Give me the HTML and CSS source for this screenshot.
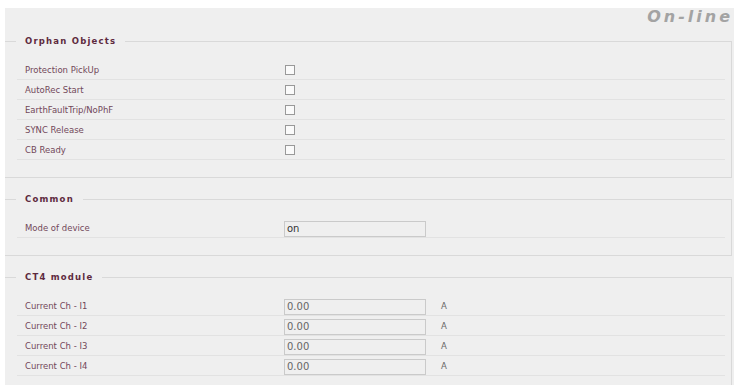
FILE: index.html
```html
<!DOCTYPE html>
<html lang="en">

<head>
    <meta charset="UTF-8">
    <title>Device status</title>
    <link rel="stylesheet" href="styles.css">
</head>

<body>

    <div class="panel">
        <!-- connection state -->
        <div class="status">On-line</div>

        <!-- Orphan Objects -->
        <fieldset class="group">
            <legend>Orphan Objects</legend>
            <div class="rows">
                <div class="row">
                    <span class="label">Protection PickUp</span>
                    <span class="value"><input type="checkbox" class="check"></span>
                </div>
                <div class="row">
                    <span class="label">AutoRec Start</span>
                    <span class="value"><input type="checkbox" class="check"></span>
                </div>
                <div class="row">
                    <span class="label">EarthFaultTrip/NoPhF</span>
                    <span class="value"><input type="checkbox" class="check"></span>
                </div>
                <div class="row">
                    <span class="label">SYNC Release</span>
                    <span class="value"><input type="checkbox" class="check"></span>
                </div>
                <div class="row">
                    <span class="label">CB Ready</span>
                    <span class="value"><input type="checkbox" class="check"></span>
                </div>
            </div>
        </fieldset>

        <!-- Common -->
        <fieldset class="group">
            <legend>Common</legend>
            <div class="rows">
                <div class="row">
                    <span class="label">Mode of device</span>
                    <span class="value"><input type="text" class="field" value="on" readonly></span>
                </div>
            </div>
        </fieldset>

        <!-- CT4 module -->
        <fieldset class="group">
            <legend>CT4 module</legend>
            <div class="rows">
                <div class="row">
                    <span class="label">Current Ch - I1</span>
                    <span class="value"><input type="text" class="field num" value="0.00" readonly></span>
                    <span class="unit">A</span>
                </div>
                <div class="row">
                    <span class="label">Current Ch - I2</span>
                    <span class="value"><input type="text" class="field num" value="0.00" readonly></span>
                    <span class="unit">A</span>
                </div>
                <div class="row">
                    <span class="label">Current Ch - I3</span>
                    <span class="value"><input type="text" class="field num" value="0.00" readonly></span>
                    <span class="unit">A</span>
                </div>
                <div class="row">
                    <span class="label">Current Ch - I4</span>
                    <span class="value"><input type="text" class="field num" value="0.00" readonly></span>
                    <span class="unit">A</span>
                </div>
            </div>
        </fieldset>
    </div>

</body>

</html>
```

FILE: styles.css
```css
/* page */
body {
    margin: 8px 4px 0 5px;
    background-color: #fff;
    font-family: "DejaVu Sans", Verdana, sans-serif;
}

.panel {
    background-color: #efefef;
    height: 377px;
    overflow: hidden;
}

/* On-line text */
.status {
    text-align: right;
    font-size: 16px;
    font-weight: bold;
    font-style: italic;
    letter-spacing: 3px;
    line-height: 18px;
    color: #a3a3a3;
    padding-right: 1px;
    height: 27px;
}

/* groups */
.group {
    margin: 0 2px 15px 0;
    padding: 0 6px 17px 12px;
    border: 1px solid #d9d9d9;
    border-left: none;
}

.group legend {
    margin-left: -1px;
    padding: 0 9px;
    font-size: 8.5px;
    font-weight: bold;
    letter-spacing: 1.2px;
    color: #5e2a3e;
    line-height: 12px;
}

.rows {
    margin-top: 13px;
}

.row {
    display: flex;
    align-items: center;
    height: 19px;
    border-bottom: 1px solid #e2e2e2;
}

.label {
    width: 259px;
    padding-left: 8px;
    font-size: 8.5px;
    color: #72485a;
}

.value {
    display: flex;
    align-items: center;
}

.check {
    appearance: none;
    width: 10px;
    height: 10px;
    margin: 1px 0 0 1px;
    border: 1px solid #999;
    background-color: #fafafa;
}

.field {
    box-sizing: border-box;
    width: 142px;
    height: 16px;
    margin: 2px 0 0 0;
    padding: 0 2px;
    border: 1px solid #cacaca;
    background-color: #efefef;
    font-family: "DejaVu Sans", Verdana, sans-serif;
    font-size: 10px;
    color: #333;
}

.num {
    color: #666;
}

.unit {
    margin-left: 15px;
    font-size: 8.5px;
    color: #666;
}
```
